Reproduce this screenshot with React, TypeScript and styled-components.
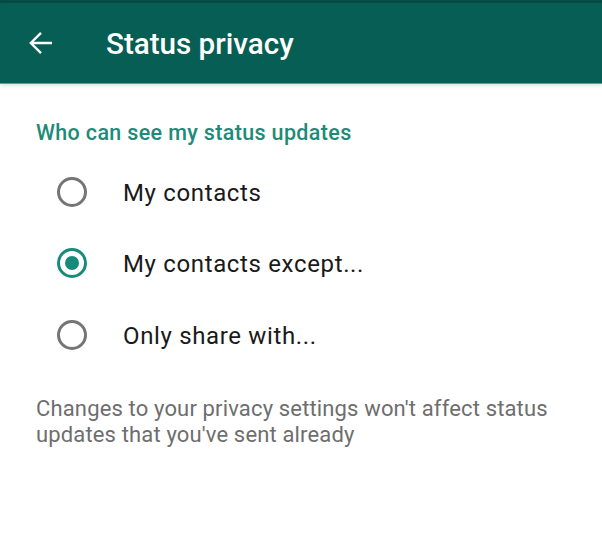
import React from "react";
import styled, { createGlobalStyle } from "styled-components";

const Global = createGlobalStyle`
  html, body { margin: 0; padding: 0; background: #ffffff; }
  body { font-family: Roboto, "Noto Sans", Arial, sans-serif; }
  * { box-sizing: border-box; }
`;

const Screen = styled.div`
  width: 602px;
  height: 555px;
  background: #ffffff;
  display: flex;
  flex-direction: column;
  overflow: hidden;
`;

const StatusStrip = styled.div`
  height: 3px;
  background: #054c44;
`;

const AppBar = styled.header`
  height: 81px;
  background: #075e54;
  display: flex;
  align-items: center;
  padding-left: 29px;
  gap: 53px;
  border-bottom: 1px solid #5f9c93;
  box-shadow: 0 2px 4px rgba(0, 0, 0, 0.12);
  position: relative;
  z-index: 1;
`;

const BackButton = styled.button`
  width: 24px;
  height: 24px;
  padding: 0;
  border: none;
  background: transparent;
  display: flex;
  align-items: center;
  justify-content: center;
  color: #ffffff;
`;

const Title = styled.h1`
  margin: 2px 0 0 0;
  font-family: Roboto, Arial, sans-serif;
  font-weight: 500;
  font-size: 29.6px;
  color: #ffffff;
`;

const Content = styled.main`
  padding-top: 35px;
  display: flex;
  flex-direction: column;
`;

const SectionTitle = styled.h2`
  margin: 0 0 0 36px;
  font-family: Roboto, Arial, sans-serif;
  font-weight: 500;
  font-size: 21.5px;
  letter-spacing: 0.35px;
  line-height: 28px;
  color: #1e8a78;
`;

const OptionList = styled.div`
  display: flex;
  flex-direction: column;
  padding-top: 9px;
`;

const Option = styled.label`
  height: 71.5px;
  display: flex;
  align-items: center;
  padding-left: 57px;
  gap: 36px;
  cursor: pointer;
`;

const Radio = styled.span<{ $checked: boolean }>`
  width: 30px;
  height: 30px;
  border-radius: 50%;
  border: 3px solid ${(p) => (p.$checked ? "#168b7a" : "#757575")};
  display: flex;
  align-items: center;
  justify-content: center;
  flex: none;
  &::after {
    content: "";
    width: 14px;
    height: 14px;
    border-radius: 50%;
    background: #168b7a;
    display: ${(p) => (p.$checked ? "block" : "none")};
  }
`;

const OptionText = styled.span`
  font-family: Roboto, Arial, sans-serif;
  font-size: 24px;
  letter-spacing: 0.65px;
  color: #1a1a1a;
  margin-top: 2px;
`;

const Footnote = styled.p`
  margin: 25px 36px 0 36px;
  font-family: Roboto, Arial, sans-serif;
  font-size: 22px;
  letter-spacing: 0.15px;
  line-height: 26.5px;
  color: #6e6e6e;
`;

const options = [
  { label: "My contacts", checked: false },
  { label: "My contacts except...", checked: true },
  { label: "Only share with...", checked: false },
];

export default function App() {
  return (
    <>
      <Global />
      <Screen>
        <StatusStrip />
        <AppBar>
          <BackButton aria-label="Back">
            <svg width="24" height="24" viewBox="0 0 24 24" fill="none">
              <path
                d="M23 12H2.5M12 1.8L1.8 12 12 22.2"
                stroke="#ffffff"
                strokeWidth="2.4"
                strokeLinecap="butt"
                strokeLinejoin="miter"
              />
            </svg>
          </BackButton>
          <Title>Status privacy</Title>
        </AppBar>
        <Content>
          <SectionTitle>Who can see my status updates</SectionTitle>
          <OptionList>
            {options.map((o) => (
              <Option key={o.label}>
                <Radio $checked={o.checked} />
                <OptionText>{o.label}</OptionText>
              </Option>
            ))}
          </OptionList>
          <Footnote>
            Changes to your privacy settings won't affect status updates that
            you've sent already
          </Footnote>
        </Content>
      </Screen>
    </>
  );
}
